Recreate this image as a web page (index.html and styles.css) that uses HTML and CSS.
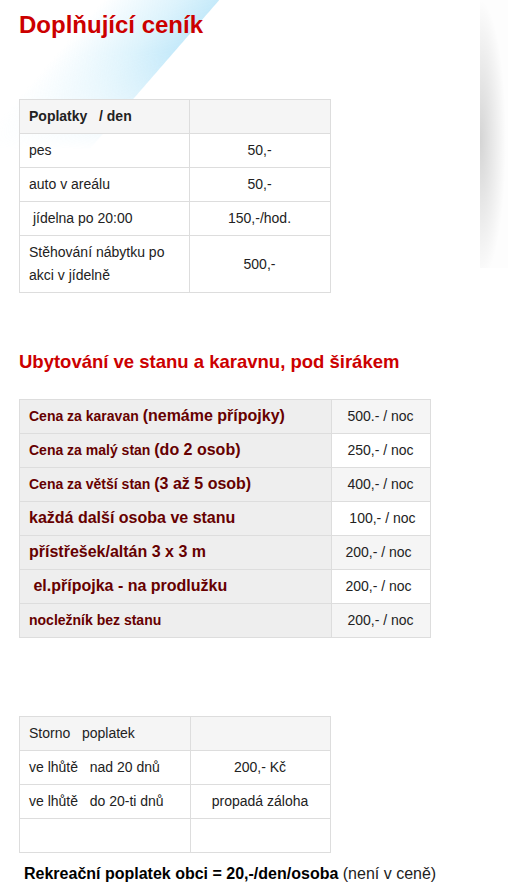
FILE: index.html
```html
<!DOCTYPE html>
<html lang="cs">
  <head>
    <meta charset="UTF-8" />
    <title>Doplňující ceník</title>
    <link rel="stylesheet" href="styles.css">
  </head>
  <body>
    <div class="sky"></div>
    <div class="edge-shadow"></div>

    <div class="page">
      <h1 class="title">Doplňující ceník</h1>

      <table class="price small">
        <tr class="head">
          <td class="name"><b>Poplatky &nbsp; / den</b></td>
          <td></td>
        </tr>
        <tr>
          <td class="name">pes</td>
          <td>50,-</td>
        </tr>
        <tr>
          <td class="name">auto v areálu</td>
          <td>50,-</td>
        </tr>
        <tr>
          <td class="name">&nbsp;jídelna po 20:00</td>
          <td>150,-/hod.</td>
        </tr>
        <tr>
          <td class="name">Stěhování nábytku po akci v jídelně</td>
          <td>500,-</td>
        </tr>
      </table>

      <h2 class="subtitle">Ubytování ve stanu a karavnu, pod širákem</h2>

      <table class="price camp">
        <tr>
          <td class="name">Cena za karavan <span class="big">(nemáme přípojky)</span></td>
          <td>500.- / noc</td>
        </tr>
        <tr>
          <td class="name">Cena za malý stan <span class="big">(do 2 osob)</span></td>
          <td>250,- / noc</td>
        </tr>
        <tr>
          <td class="name">Cena za větší stan <span class="big">(3 až 5 osob)</span></td>
          <td>400,- / noc</td>
        </tr>
        <tr>
          <td class="name"><span class="big">každá další osoba ve stanu</span></td>
          <td>&nbsp;100,- / noc</td>
        </tr>
        <tr>
          <td class="name"><span class="big">přístřešek/altán 3 x 3 m</span></td>
          <td>200,- / noc&nbsp;</td>
        </tr>
        <tr>
          <td class="name"><span class="big">&nbsp;el.přípojka - na prodlužku</span></td>
          <td>200,- / noc&nbsp;</td>
        </tr>
        <tr>
          <td class="name">nocležník bez stanu</td>
          <td>200,- / noc</td>
        </tr>
      </table>

      <table class="price small storno">
        <tr class="head">
          <td class="name">Storno &nbsp; poplatek</td>
          <td></td>
        </tr>
        <tr>
          <td class="name">ve lhůtě &nbsp; nad 20 dnů</td>
          <td>200,- Kč</td>
        </tr>
        <tr>
          <td class="name">ve lhůtě &nbsp; do 20-ti dnů</td>
          <td>propadá záloha</td>
        </tr>
        <tr>
          <td class="name">&nbsp;</td>
          <td></td>
        </tr>
      </table>

      <p class="note"><b>Rekreační poplatek obci = 20,-/den/osoba</b> (není v ceně)</p>
    </div>
  </body>
</html>
```

FILE: styles.css
```css
body {
  margin: 0;
  background: #fff;
  font-family: "Liberation Sans", Arial, sans-serif;
  color: #222;
  position: relative;
}

/* blue diagonal stripe of the site background */
.sky {
  position: absolute;
  top: 0;
  left: 0;
  width: 260px;
  height: 150px;
  background: linear-gradient(131deg, rgba(200, 236, 250, 0) 78px, rgba(206, 238, 251, 0.7) 135px, #c6eafa 165px, rgba(255, 255, 255, 0) 166px);
  -webkit-mask-image: linear-gradient(to bottom, #000 35%, transparent 100%);
  mask-image: linear-gradient(to bottom, #000 35%, transparent 100%);
}

/* shadow of the content box on the right */
.edge-shadow {
  position: absolute;
  top: 0;
  left: 480px;
  width: 28px;
  height: 268px;
  background: radial-gradient(26px 140px at 0 140px, rgba(0, 0, 0, 0.17), rgba(0, 0, 0, 0.008));
}

.page {
  position: relative;
  padding-left: 19px;
}

.title {
  margin: 11px 0 60px;
  font-size: 24px;
  line-height: 28px;
  color: #c00;
}

.subtitle {
  margin: 58px 0 27px;
  font-size: 18.5px;
  line-height: 21px;
  color: #c00;
}

.price {
  border-collapse: collapse;
  font-size: 14px;
  line-height: 23px;
}

.price td {
  border: 1px solid #ddd;
  padding: 5px 10px 5px 9px;
  text-align: center;
  vertical-align: middle;
}

.price td.name {
  text-align: left;
}

.small {
  width: 312px;
}

.small td.name {
  width: 150px;
}

.storno td.name {
  width: 151px;
}

.head td {
  background: #f5f5f5;
}

.camp {
  width: 412px;
  color: #222;
}

.camp td.name {
  width: 292px;
  background: #eee;
  color: #600;
  font-weight: bold;
}

.camp tr:nth-child(odd) td {
  background: #f5f5f5;
}

.camp tr td.name {
  background: #eee;
}

.camp .big {
  font-size: 16px;
  line-height: 16px;
}

.storno {
  margin-top: 78px;
}

.note {
  margin: 12px 0 0;
  padding-left: 5px;
  font-size: 16px;
  line-height: 18px;
  color: #222;
}

.note b {
  color: #000;
}
```
